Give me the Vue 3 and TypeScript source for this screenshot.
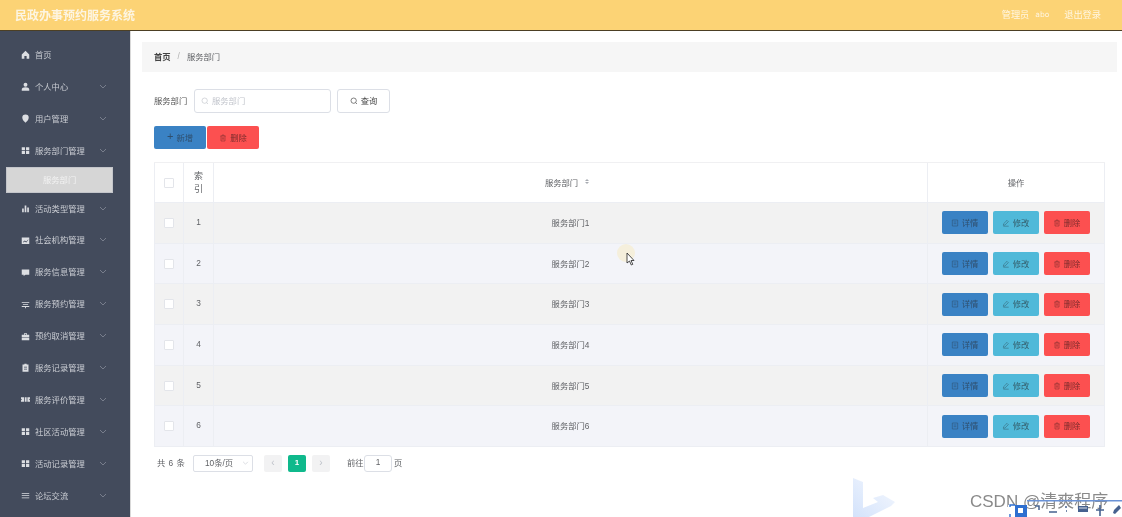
<script setup lang="ts">
const menu: { label: string; icon: string; arrow: boolean; child?: string }[] = [
  { label: '首页', icon: 'home', arrow: false },
  { label: '个人中心', icon: 'user', arrow: true },
  { label: '用户管理', icon: 'pin', arrow: true },
  { label: '服务部门管理', icon: 'grid', arrow: true, child: '服务部门' },
  { label: '活动类型管理', icon: 'bars', arrow: true },
  { label: '社会机构管理', icon: 'chart', arrow: true },
  { label: '服务信息管理', icon: 'chat', arrow: true },
  { label: '服务预约管理', icon: 'sort', arrow: true },
  { label: '预约取消管理', icon: 'case', arrow: true },
  { label: '服务记录管理', icon: 'doc', arrow: true },
  { label: '服务评价管理', icon: 'ticket', arrow: true },
  { label: '社区活动管理', icon: 'grid', arrow: true },
  { label: '活动记录管理', icon: 'grid', arrow: true },
  { label: '论坛交流', icon: 'list', arrow: true },
]
const icons: Record<string, string> = {
  home: 'M6 1 1 6v5.5h3.5V8h3v3.5H11V6z',
  user: 'M6 1a2.6 2.6 0 1 1 0 5.2A2.6 2.6 0 0 1 6 1zM1 11.5V10c0-2 2-3 5-3s5 1 5 3v1.5z',
  pin: 'M6 .8a4.3 4.3 0 0 1 4.3 4.3C10.300 8 7.500 10.500 6 11.500 4.500 10.500 1.700 8 1.700 5.100A4.300 4.300 0 0 1 6 .8z',
  grid: 'M1 1.500h4.300v4H1zM6.700 1.500H11v4H6.700zM1 6.800h4.300v4H1zM6.700 6.800H11v4H6.700z',
  bars: 'M1.500 6h2.200v5H1.500zM4.900 2h2.200v9H4.900zM8.300 4.500h2.200V11H8.300z',
  chart: 'M1 2h10v8.500H1zM2.500 8l2.500-2 2 1.300L9.500 4.500l.4.500L7 8.500 5 7.200 3 8.800z',
  chat: 'M1 2h10v7H6L3.500 10.800V9H1z',
  sort: 'M1 2.500h10v1.200H1zM2.500 5.500h7v1.200h-7zM1 8h10v1.200H6.600V11H5.400V9.200H1z',
  case: 'M4 1.500h4v2h3v3H1v-3h3zM5 2.500v1h2v-1zM1 7.300h10v3.700H1z',
  doc: 'M2 2h2.500V1h3v1H10v9.500H2zM4 5v1h4V5zM4 7.500v1h4v-1z',
  ticket: 'M0 3h12v2a1 1 0 0 0 0 2v2H0V7a1 1 0 0 0 0-2zM4 3v6h1V3zM7.500 3v6h1V3z',
  list: 'M1 2.500h10v1.300H1zM1 5.500h10v1.300H1zM1 8.500h10v1.300H1z',
}
const rows = [1, 2, 3, 4, 5, 6]
</script>

<template>
  <div class="page">
    <header class="top">
      <span class="title">民政办事预约服务系统</span>
      <div class="top-right">
        <span>管理员</span><span class="abo">abo</span><span class="logout">退出登录</span>
      </div>
    </header>
    <div class="body">
      <aside class="side">
        <template v-for="m in menu" :key="m.label">
          <div class="item">
            <svg class="ic" viewBox="0 0 12 12"><path :d="icons[m.icon]" fill="currentColor" fill-rule="evenodd" /></svg>
            <span>{{ m.label }}</span>
            <svg v-if="m.arrow" class="chev" viewBox="0 0 8 5"><path d="M1 1l3 3 3-3" fill="none" stroke="currentColor" stroke-width=".7" /></svg>
          </div>
          <div v-if="m.child" class="sub">{{ m.child }}</div>
        </template>
      </aside>
      <main class="main">
        <nav class="crumb"><b>首页</b><i>/</i><span>服务部门</span></nav>
        <div class="search">
          <label>服务部门</label>
          <div class="input">
            <svg class="s" viewBox="0 0 12 12"><circle cx="5.500" cy="5.500" r="4" fill="none" stroke="currentColor" /><path d="M8.500 8.500l2 2" stroke="currentColor" /></svg>
            服务部门
          </div>
          <button class="plain">
            <svg class="s" viewBox="0 0 12 12"><circle cx="5.500" cy="5.500" r="4" fill="none" stroke="currentColor" /><path d="M8.500 8.500l2 2" stroke="currentColor" /></svg>
            查询
          </button>
        </div>
        <div class="actions">
          <button class="btn big blue"><span class="plus">+</span>新增</button>
          <button class="btn big red">
            <svg class="s" viewBox="0 0 12 12"><path d="M2 3h8M4.500 3V1.500h3V3M3 3v7.500h6V3M5 5v3.500M7 5v3.500" fill="none" stroke="currentColor" stroke-width=".8" /></svg>
            删除
          </button>
        </div>
        <div class="table">
          <div class="tr head">
            <div class="c c1"><span class="check"></span></div>
            <div class="c c2 wrap">索引</div>
            <div class="c c3"><span>服务部门</span><span class="sorter"><em class="up"></em><em class="down"></em></span></div>
            <div class="c c4">操作</div>
          </div>
          <div v-for="r in rows" :key="r" class="tr" :class="r % 2 ? 'odd' : 'even'">
            <div class="c c1"><span class="check"></span></div>
            <div class="c c2">{{ r }}</div>
            <div class="c c3">服务部门{{ r }}</div>
            <div class="c c4 ops">
              <button class="btn blue">
                <svg class="s" viewBox="0 0 12 12"><path d="M2 1.500h8v9H2zM4 4.500h4M4 7h4" fill="none" stroke="currentColor" stroke-width=".8" /></svg>详情
              </button>
              <button class="btn cyan">
                <svg class="s" viewBox="0 0 12 12"><path d="M7.500 2l2 2-5 5-2.500.5.500-2.500zM2 10.800h8" fill="none" stroke="currentColor" stroke-width=".8" /></svg>修改
              </button>
              <button class="btn red">
                <svg class="s" viewBox="0 0 12 12"><path d="M2 3h8M4.500 3V1.500h3V3M3 3v7.500h6V3M5 5v3.500M7 5v3.500" fill="none" stroke="currentColor" stroke-width=".8" /></svg>删除
              </button>
            </div>
          </div>
        </div>
        <div class="pager">
          <span class="total">共 6 条</span>
          <div class="size">10条/页<svg class="pchev" viewBox="0 0 8 5"><path d="M1 1l3 3 3-3" fill="none" stroke="currentColor" stroke-width=".7" /></svg></div>
          <span class="pg first">‹</span>
          <span class="pg on">1</span>
          <span class="pg">›</span>
          <span class="goto">前往</span>
          <span class="jump">1</span>
          <span class="ye">页</span>
        </div>
      </main>
    </div>

    <div class="halo"></div>
    <svg class="cursor" viewBox="0 0 9 14"><path d="M1 1v10l2.500-2 1.800 4 1.500-.7L5 8.500h3z" fill="#fff" stroke="#222" stroke-width=".8" /></svg>

    <svg class="bing" viewBox="0 0 44 40">
      <defs>
        <linearGradient id="bg" x1="0" y1="1" x2="1" y2="0">
          <stop offset="0" stop-color="#d3e2fb" />
          <stop offset="1" stop-color="#f6f9fe" />
        </linearGradient>
      </defs>
      <path d="M0 0L10 4V30L25 24 20 20 30 17 42 24 38 28 14 40H0z" fill="url(#bg)" />
    </svg>
    <div class="mark">CSDN @清爽程序</div>
    <svg class="tools" viewBox="0 0 114 17">
      <path d="M19 .7H114" stroke="#6a92d6" stroke-width="1.400" />
      <rect x="0" y="5" width="19" height="12" fill="#fff" />
      <rect x="7" y="5" width="12" height="12" fill="#2e6fd0" />
      <path d="M2 7V5h5M2 14v3" fill="none" stroke="#2e6fd0" stroke-width="1.400" />
      <rect x="10" y="8" width="5" height="5" fill="#fff" />
      <path d="M27 6h4v4M41 12h8M57 7h2M58 11h1" fill="none" stroke="#46618f" stroke-width="1.500" />
      <rect x="70" y="6" width="10" height="6" fill="#46618f" />
      <path d="M71 8h8" stroke="#fff" stroke-width=".8" />
      <path d="M92 5v11M88 10h8" stroke="#46618f" stroke-width="1.600" />
      <path d="M111 5l-5 5-1 3 2 1 6-6z" fill="#46618f" />
    </svg>
  </div>
</template>

<style>
html, body { margin: 0; background: #fff; overflow: hidden; }
</style>

<style scoped>
.page {
  position: relative;
  width: 1122px;
  height: 517px;
  overflow: hidden;
  font-family: "Liberation Sans", "Noto Sans CJK SC", sans-serif;
  font-size: 8.3px;
  color: #555;
  background: #fff;
  filter: blur(0.35px);
}
.top {
  height: 30px;
  background: #fcd375;
  border-bottom: 1px solid #4c3f24;
  display: flex;
  align-items: center;
  justify-content: space-between;
  padding: 0 21px 0 15px;
  color: #fff;
}
.title { font-size: 12px; font-weight: 700; color: #fdf5e2; padding-bottom: 2px; }
.top-right { display: flex; align-items: center; font-size: 9.200px; color: #fff6e2; padding-bottom: 2px; }
.abo { margin: 0 15px 0 6px; font-size: 7.500px; font-family: "DejaVu Sans", sans-serif; }
.body { display: flex; height: 486px; }
.side {
  width: 131px;
  flex: none;
  background: #434b5c;
  padding-top: 8px;
  box-sizing: border-box;
  border-right: 1px solid #d9d9d9;
  color: #c9ccd2;
}
.item { height: 31.900px; box-sizing: border-box; padding: 0 0 2px 21px; position: relative; display: flex; align-items: center; }
.ic { width: 9px; height: 9px; margin-right: 5px; color: #dcdee2; position: relative; top: 1px; }
.chev { position: absolute; left: 99px; top: 13px; width: 8px; height: 5px; color: #8f95a1; }
.sub {
  margin: 0 17px 0 6px;
  height: 26px;
  background: #d6d6d6;
  border: 1px solid #c3c5ca;
  box-sizing: border-box;
  color: #f2f2f2;
  display: flex;
  align-items: center;
  padding: 0 0 2px 36px;
}
.main { flex: 1; padding: 11px 5px 0 11px; min-width: 0; }
.crumb {
  height: 30px;
  box-sizing: border-box;
  background: #f6f6f6;
  display: flex;
  align-items: center;
  padding: 0 0 2px 12px;
  color: #606266;
}
.crumb b { font-weight: 700; color: #444; }
.crumb i { margin: 0 7px; font-style: normal; color: #b0b0b0; }
.search { display: flex; align-items: center; margin: 17px 0 0 12px; height: 24px; }
.search label { width: 40px; flex: none; color: #555; padding-bottom: 2px; }
.input {
  width: 137px;
  height: 24px;
  box-sizing: border-box;
  border: 1px solid #dcdfe6;
  border-radius: 3px;
  display: flex;
  align-items: center;
  padding: 0 0 2px 6px;
  color: #c2c5cc;
}
.s { width: 8px; height: 8px; margin-right: 3px; flex: none; position: relative; top: 1px; }
.plain {
  margin-left: 6px;
  width: 53px;
  height: 24px;
  background: #fff;
  border: 1px solid #dcdfe6;
  border-radius: 3px;
  font: inherit;
  color: #444;
  display: flex;
  align-items: center;
  justify-content: center;
  padding: 0 0 2px;
}
.actions { display: flex; gap: 1px; margin: 13px 0 0 12px; }
.btn {
  width: 46px;
  height: 23px;
  border: 0;
  border-radius: 2px;
  font: inherit;
  color: #444;
  display: flex;
  align-items: center;
  justify-content: center;
  padding: 0 0 2px;
}
.btn.big { width: 52px; }
.blue { background: #3a82c4; color: #2f4f6e; }
.cyan { background: #50b9d9; color: #35616f; }
.red { background: #fc5050; color: #7c2d2d; }
.plus { font-size: 11px; margin-right: 3px; line-height: 1; }
.table {
  margin: 13px 0 0 12px;
  width: 951px;
  height: 285px;
  display: flex;
  flex-direction: column;
}
.tr { display: flex; flex: 1; min-height: 0; border-bottom: 1px solid #eceef3; box-sizing: border-box; }
.tr.head { flex: none; height: 41px; background: #fff; border-top: 1px solid #f0f0f2; }
.odd { background: #f2f2f2; }
.even { background: #f3f4f9; }
.c {
  display: flex;
  align-items: center;
  justify-content: center;
  border-right: 1px solid #eceef3;
  box-sizing: border-box;
  color: #606266;
  padding-bottom: 2px;
}
.c:first-child { border-left: 1px solid #eceef3; }
.c1 { width: 30px; padding-bottom: 0; }
.c2 { width: 30px; }
.c3 { width: 714px; }
.c4 { width: 177px; }
.wrap { padding: 0 10px; text-align: center; line-height: 13px; font-size: 9px; }
.check {
  width: 10px;
  height: 10px;
  box-sizing: border-box;
  background: #fff;
  border: 1px solid #e3e5ea;
  border-radius: 1px;
}
.sorter { display: inline-flex; flex-direction: column; gap: 1px; margin: 0 7px 0 7px; }
.sorter em { display: block; width: 0; height: 0; border: 2.500px solid transparent; }
.sorter .up { border-top: 0; border-bottom-color: #a8abb2; }
.sorter .down { border-bottom: 0; border-top-color: #a8abb2; }
.ops { gap: 5px; padding: 0 1px 0 0; }
.pager { display: flex; align-items: center; margin: 7px 0 0 15px; height: 18px; color: #606266; }
.total { width: 36px; word-spacing: 1px; flex: none; padding-bottom: 2px; }
.size {
  width: 60px;
  height: 17px;
  box-sizing: border-box;
  border: 1px solid #dcdfe6;
  border-radius: 2px;
  position: relative;
  display: flex;
  align-items: center;
  padding: 0 0 2px 11px;
}
.pchev { position: absolute; right: 3px; top: 5px; width: 7px; height: 4px; color: #c0c4cc; }
.pg {
  width: 18px;
  height: 17px;
  margin-left: 6px;
  background: #f2f2f3;
  border-radius: 2px;
  color: #bfc3ca;
  display: flex;
  align-items: center;
  justify-content: center;
  font-size: 10px;
  padding-bottom: 1px;
  box-sizing: border-box;
}
.pg.first { margin-left: 11px; }
.pg.on { background: #0fb98c; color: #fff; font-size: 8px; font-weight: 700; }
.goto { margin-left: 17px; width: 17px; flex: none; padding-bottom: 2px; }
.jump {
  width: 28px;
  height: 17px;
  box-sizing: border-box;
  border: 1px solid #dcdfe6;
  border-radius: 3px;
  display: flex;
  align-items: center;
  justify-content: center;
  padding-bottom: 2px;
}
.ye { margin-left: 2px; padding-bottom: 2px; }
.halo {
  position: absolute;
  left: 617px;
  top: 244px;
  width: 18px;
  height: 18px;
  border-radius: 50%;
  background: #f5efdc;
}
.cursor { position: absolute; left: 626px; top: 252px; width: 9px; height: 14px; }
.bing { position: absolute; left: 853px; top: 478px; width: 44px; height: 40px; }
.tools { position: absolute; left: 1008px; top: 500px; width: 114px; height: 17px; }
.mark {
  position: absolute;
  left: 970px;
  top: 487px;
  font-size: 17px;
  color: #8a8a8a;
  white-space: nowrap;
}
</style>
